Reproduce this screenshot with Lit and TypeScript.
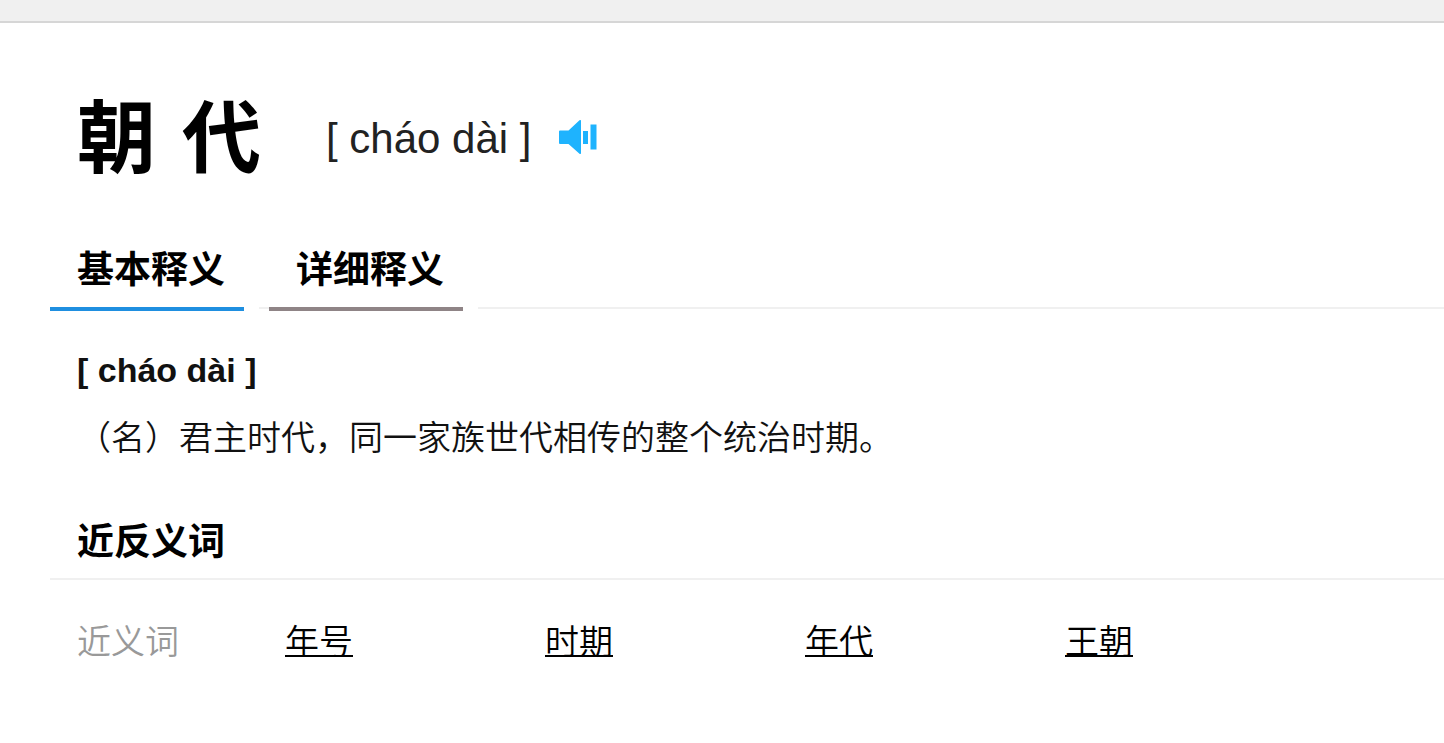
import { LitElement, html, css } from "lit";
import { customElement, state } from "lit/decorators.js";

@customElement("app-root")
export class AppRoot extends LitElement {
  static styles = css`
    :host {
      display: block;
      min-height: 100vh;
      overflow-x: hidden;
      background: #fff;
      color: #000;
      font-family: "Liberation Sans", "Noto Sans CJK SC", sans-serif;
    }
    .topbar {
      height: 21px;
      background: #f0f0f0;
      border-bottom: 2px solid #d6d6d6;
    }
    .entry {
      padding: 64px 0 40px 50px;
    }
    .head {
      display: flex;
      align-items: center;
      padding-left: 27px;
    }
    .word {
      display: flex;
      gap: 26px;
      margin: 0;
      padding: 3px 0 1px;
      font-size: 79px;
      line-height: 100px;
      font-weight: 700;
    }
    .pinyin {
      margin-left: 65px;
      font-size: 42px;
      line-height: 48px;
      color: #222;
    }
    .speak {
      display: flex;
      margin: 0 0 0 27px;
      padding: 0 0 4px;
      border: 0;
      background: none;
      cursor: pointer;
    }
    .tabs {
      display: flex;
      align-items: flex-end;
      margin-top: 54px;
    }
    .tab {
      margin: 0 15px 0 0;
      padding: 0 19px 10px 27px;
      border: 0;
      border-bottom: 4px solid #8f8486;
      background: none;
      font: inherit;
      font-size: 37px;
      line-height: 52px;
      font-weight: 700;
      color: #000;
      cursor: pointer;
    }
    .tab.active {
      border-bottom-color: #1f8fe0;
    }
    .rule {
      width: 10px;
      height: 2px;
      margin-bottom: 2px;
      background: #f0f0f0;
    }
    .rule.rest {
      width: auto;
      flex: 1;
    }
    .reading {
      margin: 39px 0 0 27px;
      font-size: 34px;
      line-height: 40px;
      font-weight: 700;
      color: #111;
    }
    .meaning {
      margin: 23px 27px 0;
      font-size: 34px;
      line-height: 50px;
      font-weight: 350;
      color: #111;
    }
    .section {
      margin: 54px 0 0;
      padding: 0 27px 9px;
      border-bottom: 2px solid #f0f0f0;
      font-size: 37px;
      line-height: 52px;
      font-weight: 700;
    }
    .related {
      display: flex;
      margin: 37px 0 0 27px;
      font-size: 34px;
      line-height: 50px;
      font-weight: 350;
    }
    .kind {
      width: 208px;
      color: #999;
    }
    .words {
      display: grid;
      grid-template-columns: repeat(4, 260px);
      margin: 0;
      padding: 0;
      list-style: none;
    }
    .words a {
      color: #000;
      text-decoration: underline;
      text-decoration-thickness: 2px;
    }
  `;

  @state() private active = 0;

  private tabs = ["基本释义", "详细释义"];
  private synonyms = ["年号", "时期", "年代", "王朝"];

  render() {
    return html`
      <div class="topbar"></div>
      <main class="entry" lang="zh-CN">
        <header class="head">
          <h1 class="word"><span>朝</span><span>代</span></h1>
          <span class="pinyin">[ cháo dài ]</span>
          <button class="speak" aria-label="发音">
            <svg width="40" height="40" viewBox="0 0 40 40" fill="#1eb3fe">
              <path d="M2 13.500h8.500L21.500 3.200a.9.9 0 0 1 1.500.6v32.400a.9.9 0 0 1-1.500.6L10.500 27H2a1 1 0 0 1-1-1V14.500a1 1 0 0 1 1-1z" />
              <rect x="25" y="14" width="5" height="13" />
              <rect x="32.500" y="7.500" width="6" height="25" />
            </svg>
          </button>
        </header>
        <nav class="tabs">
          ${this.tabs.map(
            (name, i) => html`
              ${i > 0 ? html`<span class="rule"></span>` : ""}
              <button
                class="tab ${this.active === i ? "active" : ""}"
                @click=${() => (this.active = i)}
              >${name}</button>
            `
          )}
          <span class="rule rest"></span>
        </nav>
        <p class="reading">[ cháo dài ]</p>
        <p class="meaning">（名）君主时代，同一家族世代相传的整个统治时期。</p>
        <h2 class="section">近反义词</h2>
        <div class="related">
          <span class="kind">近义词</span>
          <ul class="words">
            ${this.synonyms.map((w) => html`<li><a href="#">${w}</a></li>`)}
          </ul>
        </div>
      </main>
    `;
  }
}
